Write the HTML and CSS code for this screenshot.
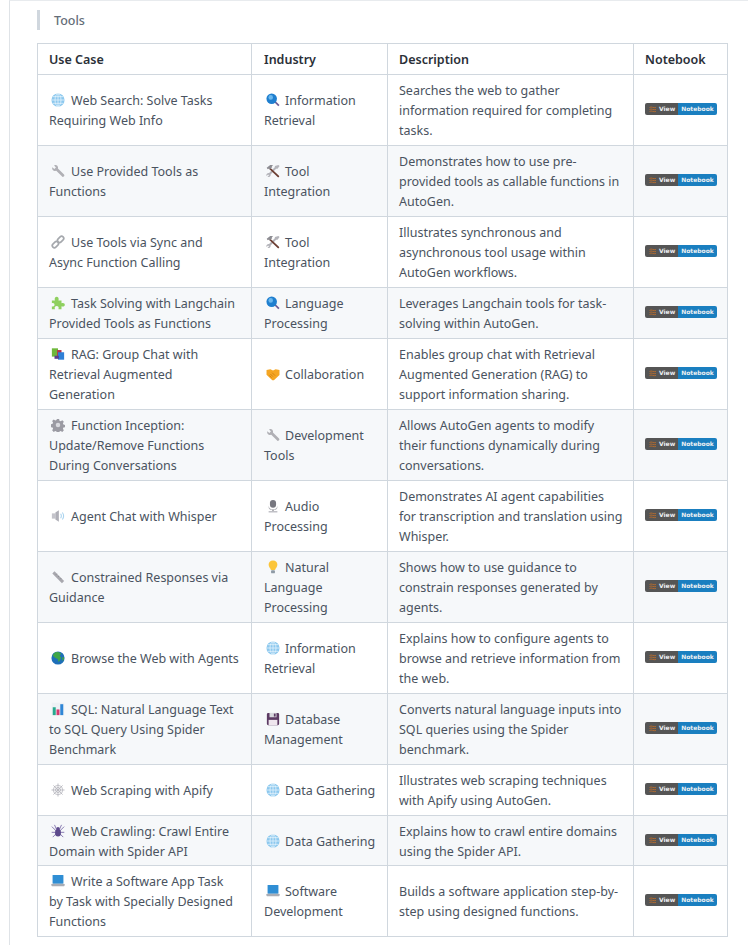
FILE: index.html
```html
<!DOCTYPE html>
<html lang="en">
<head>
<meta charset="utf-8">
<title>Tools</title>
<link rel="stylesheet" href="styles.css">
</head>
<body>
<svg class="defs" width="0" height="0" aria-hidden="true">
<symbol id="globe" viewBox="0 0 16 16"><circle cx="8" cy="8" r="7.5" fill="#8cc8ee"/><g fill="none" stroke="#e4f3fc" stroke-width=".9"><ellipse cx="8" cy="8" rx="3.4" ry="7.2"/><path d="M8 .6v14.8M.6 8h14.8M1.8 4.2h12.4M1.8 11.8h12.4"/></g></symbol>
<symbol id="mag" viewBox="0 0 16 16"><path d="M9 10l5 5.2 1.4-1.4-5-5z" fill="#6b5b95"/><circle cx="6.5" cy="6.5" r="6" fill="#1f7fcf"/><circle cx="5.4" cy="5" r="2.6" fill="#6bb8ee"/></symbol>
<symbol id="wrench" viewBox="0 0 16 16"><path d="M1.5 3.6L3.8 5.6 5.6 4 3.6 1.6C5.6.6 7.6 1.6 8 3.6c.1.6 0 1.1-.1 1.5l7 7c.9 1 .2 2.9-1.6 2.7L6 7.8c-2.400.8-5.400-1.400-4.500-4.200z" fill="#b0b0b5"/></symbol>
<symbol id="tools" viewBox="0 0 16 16"><path d="M14.200 1l1.300 1.300-2.300 3-1.600.2L5.200 12c.6 1.900-1.600 3.700-3.500 2.700l1.700-1.700-1-1-1.700 1.700C-.3 11.800 1.600 9.700 3.500 10.300L10 3.800l.2-1.600z" fill="#b4b4ba"/><path d="M2.200 4.400L3.800 3l11 10.400c1 1.100-.5 2.600-1.500 1.500z" fill="#6d3f33"/><path d="M.8 4.300L4.800 1h3.400l-.4.800-1.300.5.700 1.200-3 2.900-1.200-1.200-1.100.8z" fill="#8d8d93"/></symbol>
<symbol id="link" viewBox="0 0 16 16"><g fill="none" stroke="#a5a8ad" stroke-width="1.900"><rect x="-4.700" y="-2.400" width="8" height="4.800" rx="2.400" transform="translate(5.500 10.500) rotate(-45)"/><rect x="-3.300" y="-2.400" width="8" height="4.800" rx="2.400" transform="translate(10.500 5.500) rotate(-45)"/></g></symbol>
<symbol id="puzzle" viewBox="0 0 16 16"><path d="M1 5h3.500C3.500 2.500 5 .8 6.500.8S9.500 2.500 8.500 5H12v3.200c2.500-1 3.800.4 3.800 1.800s-1.400 2.800-3.800 1.800V15H8.500c1-2.400-.5-3.600-2-3.600S3.500 12.600 4.500 15H1v-3.300c2 .8 3-.4 3-1.700S3 7.500 1 8.300z" fill="#8fd05f"/></symbol>
<symbol id="books" viewBox="0 0 16 16"><rect x="1" y="1.500" width="7" height="9.500" fill="#6fb83c"/><rect x="7" y="3.500" width="5" height="9" fill="#b5344a"/><rect x="8" y="6" width="7" height="8.500" fill="#2f7fd6"/><rect x="4" y="10" width="5" height="3.500" fill="#5a3e8f"/></symbol>
<symbol id="hands" viewBox="0 0 16 16"><path d="M.6 3.500L5 2.500 8 4l3-1.500 4.400 1V9L9 15H7.200L.6 8.800z" fill="#f5a623"/><path d="M5 8l3 3M7 6.500l3.400 3.400M3.800 9.600l2.600 2.600" stroke="#c87a12" stroke-width=".9" fill="none"/></symbol>
<symbol id="gear" viewBox="0 0 16 16"><path d="M6.700 1h2.600l.4 2 1.400.6 1.800-1.100 1.800 1.800-1.100 1.800.6 1.400 2 .4v2.600l-2 .4-.6 1.400 1.100 1.800-1.800 1.800-1.800-1.100-1.400.6-.4 2H6.700l-.4-2-1.400-.6-1.800 1.100-1.800-1.800 1.100-1.800-.6-1.400-2-.4V7.100l2-.4.600-1.400-1.100-1.800 1.800-1.800 1.800 1.100 1.400-.6z" fill="#9b9ba3"/><circle cx="8" cy="8" r="2.600" fill="#d9dadf"/></symbol>
<symbol id="speaker" viewBox="0 0 16 16"><rect x="1" y="5" width="4" height="6" fill="#c4c4cb"/><path d="M5 4l4-2.500v13L5 12z" fill="#b0b0b8"/><path d="M11 5.500c1 1.500 1 3.500 0 5M13 4c1.800 2.500 1.800 5.500 0 8" stroke="#a9d3ef" stroke-width="1.200" fill="none"/></symbol>
<symbol id="mic" viewBox="0 0 16 16"><rect x="4.500" y="1" width="7" height="9" rx="3.400" fill="#77777f"/><path d="M3 7.500c0 6 10 6 10 0v2c0 4.500-10 4.500-10 0z" fill="#aaaab0"/><rect x="7" y="12" width="2" height="2" fill="#aaaab0"/><rect x="3" y="13.800" width="10" height="1.600" fill="#bdbdc3"/></symbol>
<symbol id="ruler" viewBox="0 0 16 16"><path d="M4 1.500L15 12.500 12.500 15 1.500 4z" fill="#a8a8ae"/><path d="M5.500 5.500l1.200-1.200M8 8l1.200-1.200M10.500 10.500l1.200-1.200" stroke="#85858b" stroke-width=".8"/></symbol>
<symbol id="bulb" viewBox="0 0 16 16"><path d="M8 .6c3.200 0 5 2.300 5 4.700 0 2.700-2.300 4-2.600 6.200H5.600C5.300 9.300 3 8 3 5.300 3 2.900 4.800.6 8 .6z" fill="#fbc53a"/><rect x="5.800" y="11.800" width="4.400" height="3.400" rx="1" fill="#8f9aa5"/></symbol>
<symbol id="earth" viewBox="0 0 16 16"><circle cx="8" cy="8" r="7.500" fill="#1e6fb8"/><path d="M5 1.500c2-.8 5 0 6.500 1.500L10 5.500l1.500 2-1 3-2 2-.8-3.500-2.700-1-3-2.500C2.500 4 3.500 2.300 5 1.500zM12.500 7l2.500.5c0 1.500-.6 3-1.600 4.200z" fill="#3fa648"/></symbol>
<symbol id="chart" viewBox="0 0 16 16"><rect x=".8" y=".8" width="14.400" height="14.400" fill="#eef1f5"/><rect x="2" y="6" width="3.400" height="9" fill="#27a98f"/><rect x="6.300" y="8.500" width="3.400" height="6.500" fill="#d6386f"/><rect x="10.600" y="2.500" width="3.400" height="12.500" fill="#2f86d6"/></symbol>
<symbol id="floppy" viewBox="0 0 16 16"><path d="M1 2.500A1.500 1.500 0 012.500 1h11A1.500 1.500 0 0115 2.500v11a1.500 1.500 0 01-1.500 1.500h-11A1.500 1.500 0 011 13.500z" fill="#5c3a63"/><rect x="4" y="1" width="8" height="5" fill="#d8d8de"/><rect x="9" y="1.800" width="2" height="3.400" fill="#5c3a63"/><rect x="3" y="9" width="10" height="6" fill="#efe6ee"/></symbol>
<symbol id="web" viewBox="0 0 16 16"><g fill="none" stroke="#b4b4bb" stroke-width=".9"><path d="M8 .5v15M.5 8h15M2.700 2.700l10.600 10.600M13.300 2.700L2.700 13.300"/><path d="M8 2.500L12 4 13.500 8 12 12 8 13.500 4 12 2.500 8 4 4zM8 5l2.100.9L11 8l-.9 2.100L8 11l-2.100-.9L5 8l.9-2.100z"/></g></symbol>
<symbol id="spider" viewBox="0 0 16 16"><g fill="none" stroke="#7a6ba8" stroke-width="1"><path d="M6 8L1 3M10 8l5-5M5.500 9.500H.8M10.500 9.500h4.700M6 11l-4 4M10 11l4 4M6.500 6.500L4 1M9.500 6.500L12 1"/></g><ellipse cx="8" cy="10" rx="3.400" ry="4.400" fill="#5d4a8c"/><circle cx="8" cy="5.500" r="2" fill="#5d4a8c"/></symbol>
<symbol id="laptop" viewBox="0 0 16 16"><rect x="1.800" y="1" width="12.400" height="10" rx=".8" fill="#2f8ed4"/><rect x=".5" y="11" width="15" height="3" rx=".8" fill="#a9adb5"/></symbol>
<symbol id="colab" viewBox="0 0 16 16"><g fill="none" stroke="#b86c2e" stroke-width="1.800"><path d="M1 4c4-3 8 2 13 0M1 8c4-3 8 2 13 0M1 12c4-3 8 2 13 0"/></g></symbol>
</svg>
<main class="panel">
<blockquote class="note">Tools</blockquote>
<table class="grid">
<colgroup><col class="c1"><col class="c2"><col class="c3"><col class="c4"></colgroup>
<thead><tr><th>Use Case</th><th>Industry</th><th>Description</th><th>Notebook</th></tr></thead>
<tbody>
<tr><td><svg class="em"><use href="#globe"/></svg>Web Search: Solve Tasks Requiring Web Info</td><td><svg class="em"><use href="#mag"/></svg>Information Retrieval</td><td>Searches the web to gather information required for completing tasks.</td><td><span class="badge"><span class="bl"><svg class="co"><use href="#colab"/></svg>View</span><span class="br">Notebook</span></span></td></tr>
<tr><td><svg class="em"><use href="#wrench"/></svg>Use Provided Tools as Functions</td><td><svg class="em"><use href="#tools"/></svg>Tool Integration</td><td>Demonstrates how to use pre-provided tools as callable functions in AutoGen.</td><td><span class="badge"><span class="bl"><svg class="co"><use href="#colab"/></svg>View</span><span class="br">Notebook</span></span></td></tr>
<tr><td><svg class="em"><use href="#link"/></svg>Use Tools via Sync and<br>Async Function Calling</td><td><svg class="em"><use href="#tools"/></svg>Tool Integration</td><td>Illustrates synchronous and asynchronous tool usage within AutoGen workflows.</td><td><span class="badge"><span class="bl"><svg class="co"><use href="#colab"/></svg>View</span><span class="br">Notebook</span></span></td></tr>
<tr><td><svg class="em"><use href="#puzzle"/></svg>Task Solving with Langchain Provided Tools as Functions</td><td><svg class="em"><use href="#mag"/></svg>Language Processing</td><td>Leverages Langchain tools for task-solving within AutoGen.</td><td><span class="badge"><span class="bl"><svg class="co"><use href="#colab"/></svg>View</span><span class="br">Notebook</span></span></td></tr>
<tr><td><svg class="em"><use href="#books"/></svg>RAG: Group Chat with Retrieval Augmented Generation</td><td><svg class="em"><use href="#hands"/></svg>Collaboration</td><td>Enables group chat with Retrieval Augmented Generation (RAG) to support information sharing.</td><td><span class="badge"><span class="bl"><svg class="co"><use href="#colab"/></svg>View</span><span class="br">Notebook</span></span></td></tr>
<tr><td><svg class="em"><use href="#gear"/></svg>Function Inception: Update/Remove Functions During Conversations</td><td><svg class="em"><use href="#wrench"/></svg>Development Tools</td><td>Allows AutoGen agents to modify their functions dynamically during conversations.</td><td><span class="badge"><span class="bl"><svg class="co"><use href="#colab"/></svg>View</span><span class="br">Notebook</span></span></td></tr>
<tr><td><svg class="em"><use href="#speaker"/></svg>Agent Chat with Whisper</td><td><svg class="em"><use href="#mic"/></svg>Audio Processing</td><td>Demonstrates AI agent capabilities<br>for transcription and translation using Whisper.</td><td><span class="badge"><span class="bl"><svg class="co"><use href="#colab"/></svg>View</span><span class="br">Notebook</span></span></td></tr>
<tr><td><svg class="em"><use href="#ruler"/></svg>Constrained Responses via Guidance</td><td><svg class="em"><use href="#bulb"/></svg>Natural Language Processing</td><td>Shows how to use guidance to constrain responses generated by agents.</td><td><span class="badge"><span class="bl"><svg class="co"><use href="#colab"/></svg>View</span><span class="br">Notebook</span></span></td></tr>
<tr><td><svg class="em"><use href="#earth"/></svg>Browse the Web with Agents</td><td><svg class="em"><use href="#globe"/></svg>Information Retrieval</td><td>Explains how to configure agents to browse and retrieve information from the web.</td><td><span class="badge"><span class="bl"><svg class="co"><use href="#colab"/></svg>View</span><span class="br">Notebook</span></span></td></tr>
<tr><td><svg class="em"><use href="#chart"/></svg>SQL: Natural Language Text to SQL Query Using Spider Benchmark</td><td><svg class="em"><use href="#floppy"/></svg>Database Management</td><td>Converts natural language inputs into SQL queries using the Spider benchmark.</td><td><span class="badge"><span class="bl"><svg class="co"><use href="#colab"/></svg>View</span><span class="br">Notebook</span></span></td></tr>
<tr><td><svg class="em"><use href="#web"/></svg>Web Scraping with Apify</td><td><svg class="em"><use href="#globe"/></svg>Data Gathering</td><td>Illustrates web scraping techniques with Apify using AutoGen.</td><td><span class="badge"><span class="bl"><svg class="co"><use href="#colab"/></svg>View</span><span class="br">Notebook</span></span></td></tr>
<tr class="tight"><td><svg class="em"><use href="#spider"/></svg>Web Crawling: Crawl Entire Domain with Spider API</td><td><svg class="em"><use href="#globe"/></svg>Data Gathering</td><td>Explains how to crawl entire domains using the Spider API.</td><td><span class="badge"><span class="bl"><svg class="co"><use href="#colab"/></svg>View</span><span class="br">Notebook</span></span></td></tr>
<tr><td><svg class="em"><use href="#laptop"/></svg>Write a Software App Task by Task with Specially Designed Functions</td><td><svg class="em"><use href="#laptop"/></svg>Software Development</td><td>Builds a software application step-by-step using designed functions.</td><td><span class="badge"><span class="bl"><svg class="co"><use href="#colab"/></svg>View</span><span class="br">Notebook</span></span></td></tr>
</tbody>
</table>
</main>
</body>
</html>
```
FILE: styles.css
```css
html, body {
  margin: 0;
  padding: 0;
  background: #fff;
}
body {
  font-family: "Noto Sans", "Open Sans", sans-serif;
  font-size: 12.5px;
  line-height: 20px;
  color: #4a5360;
}
.defs {
  position: absolute;
}
.panel {
  margin-left: 9px;
  border-left: 1px solid #dfe3e7;
  border-top: 1px solid #e8ebee;
  padding: 9px 20px 8px 27px;
}
.note {
  margin: 0 0 13px;
  border-left: 3px solid #d0d7de;
  padding: 1px 0 0 14px;
  height: 19px;
  font-weight: 500;
  color: #646d78;
}
.grid {
  table-layout: fixed;
  width: 690px;
  border-collapse: collapse;
}
.c1 { width: 214px; }
.c2 { width: 136px; }
.c3 { width: 246px; }
.c4 { width: 94px; }
.grid th, .grid td {
  border: 1px solid #d0d7de;
  padding: 6px 11px 4px;
  text-align: left;
  vertical-align: middle;
}
.grid th {
  font-weight: 600;
  color: #2b3038;
}
.grid td:nth-child(2), .grid th:nth-child(2) {
  padding-left: 12px;
  padding-right: 10px;
}
.grid td:nth-child(2) .em {
  margin-right: 5px;
}
.grid td:nth-child(3) {
  padding-right: 8px;
}
.grid tbody tr:nth-child(even) {
  background: #f6f8fa;
}
.grid .tight td {
  padding-bottom: 3px;
}
.em {
  display: inline-block;
  width: 14px;
  height: 14px;
  margin: 0 6px 0 2px;
  vertical-align: -2px;
}
.badge {
  display: flex;
  width: 72px;
  height: 12px;
  margin-bottom: 4px;
  border-radius: 2px;
  overflow: hidden;
  font-family: "DejaVu Sans", sans-serif;
  font-size: 6px;
  line-height: 12px;
  font-weight: 700;
  color: #eceff2;
}
.bl {
  display: flex;
  align-items: center;
  gap: 2px;
  width: 33px;
  padding-left: 4px;
  box-sizing: border-box;
  background: #555;
}
.br {
  flex: 1;
  text-align: center;
  background: #1a7fc0;
  font-size: 6px;
}
.co {
  width: 8px;
  height: 9px;
}
```
